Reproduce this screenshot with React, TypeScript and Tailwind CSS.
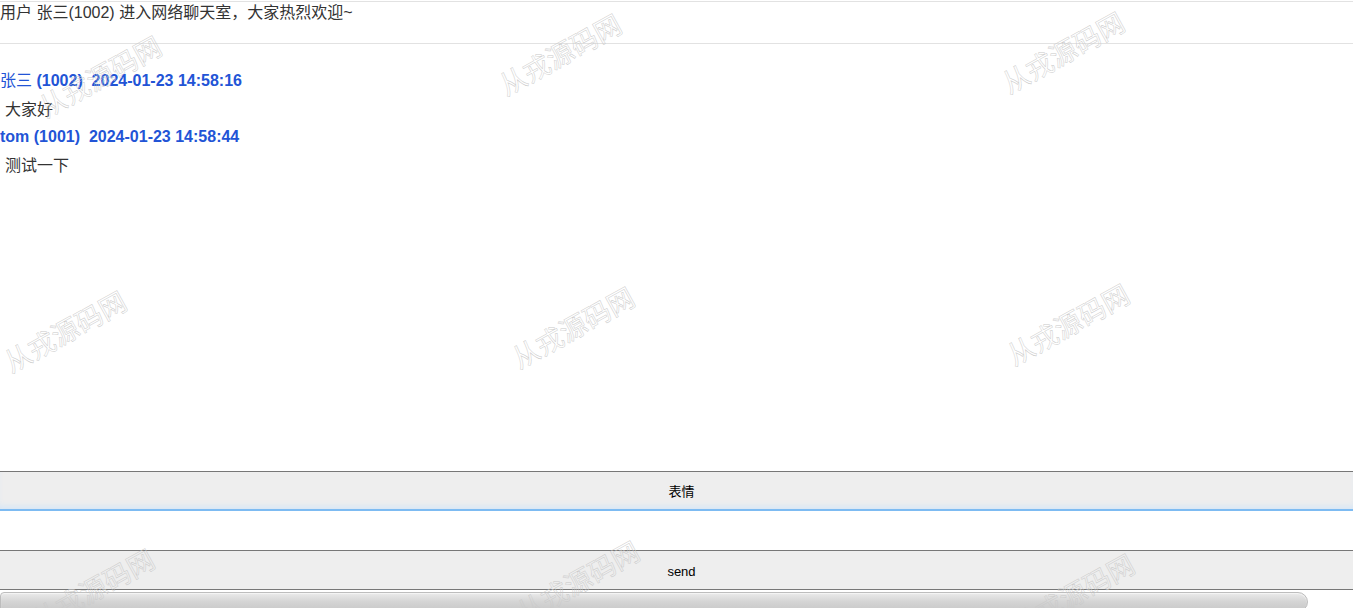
import React from 'react';

const messages = [
  { name: '张三', id: '1002', time: '2024-01-23 14:58:16', text: '大家好' },
  { name: 'tom', id: '1001', time: '2024-01-23 14:58:44', text: '测试一下' },
];

// watermark centres, roughly where the page tiles them
const marks = [
  'left-[32px] top-[62px]',
  'left-[492px] top-[40px]',
  'left-[995px] top-[38px]',
  'left-[-3px] top-[317px]',
  'left-[505px] top-[313px]',
  'left-[1000px] top-[310px]',
  'left-[25px] top-[575px]',
  'left-[510px] top-[567px]',
  'left-[1005px] top-[580px]',
];

const Watermark = ({ pos }) => (
  <div
    className={`pointer-events-none absolute ${pos} -rotate-[29deg] origin-center whitespace-nowrap text-[27px] leading-none text-transparent [-webkit-text-stroke:0.45px_#c8c8c8] [-webkit-font-smoothing:antialiased]`}
    style={{ fontFamily: '"Noto Sans CJK SC", sans-serif' }}
  >
    从戎源码网
  </div>
);

const ChatLine = ({ msg }) => (
  <div>
    <div className="h-[28px] leading-[28px] font-bold text-[16px] text-[#2254d6]">
      {msg.name === '张三' ? <span className="font-normal">{msg.name}</span> : msg.name} ({msg.id})&nbsp;&nbsp;{msg.time}
    </div>
    <div className="h-[28px] leading-[30px] text-[16px] text-[#333] pl-[5px]">{msg.text}</div>
  </div>
);

export default function App() {
  return (
    <div
      className="relative h-[608px] w-full overflow-hidden bg-white"
      style={{ fontFamily: '"Liberation Sans", "Noto Sans CJK SC", sans-serif' }}
    >
      <div className="mt-[1px] h-[43px] border-y border-[#e2e2e2] text-[16px] leading-[20px] text-[#333] pt-[1px]">
        用户 张三(1002) 进入网络聊天室，大家热烈欢迎~
      </div>
      <div className="h-[427px] pt-[23px]">
        {messages.map((m) => (
          <ChatLine key={m.time} msg={m} />
        ))}
      </div>
      <button className="block h-[40px] w-full border-t border-b-2 border-t-[#777] border-b-[#7dbbf2] bg-[#eeeeee] pl-[10px] pt-[3px] text-[13px] text-black shadow-[inset_0_-6px_6px_-3px_#d6e6f6]">
        表情
      </button>
      <div className="h-[39px] w-full bg-white"></div>
      <button className="block h-[40px] w-full border-y border-[#777] bg-[#eeeeee] pl-[10px] pt-[4px] text-[13px] text-black">
        send
      </button>
      <div className="mt-[2px] h-[20px] w-[1308px] rounded-r-[10px] rounded-l-[4px] border border-[#bdbdbd] bg-gradient-to-b from-[#eaeaea] via-[#d4d4d4] to-[#c8c8c8] shadow-[inset_0_1px_1px_#f5f5f5]"></div>
      {marks.map((p) => (
        <Watermark key={p} pos={p} />
      ))}
    </div>
  );
}
